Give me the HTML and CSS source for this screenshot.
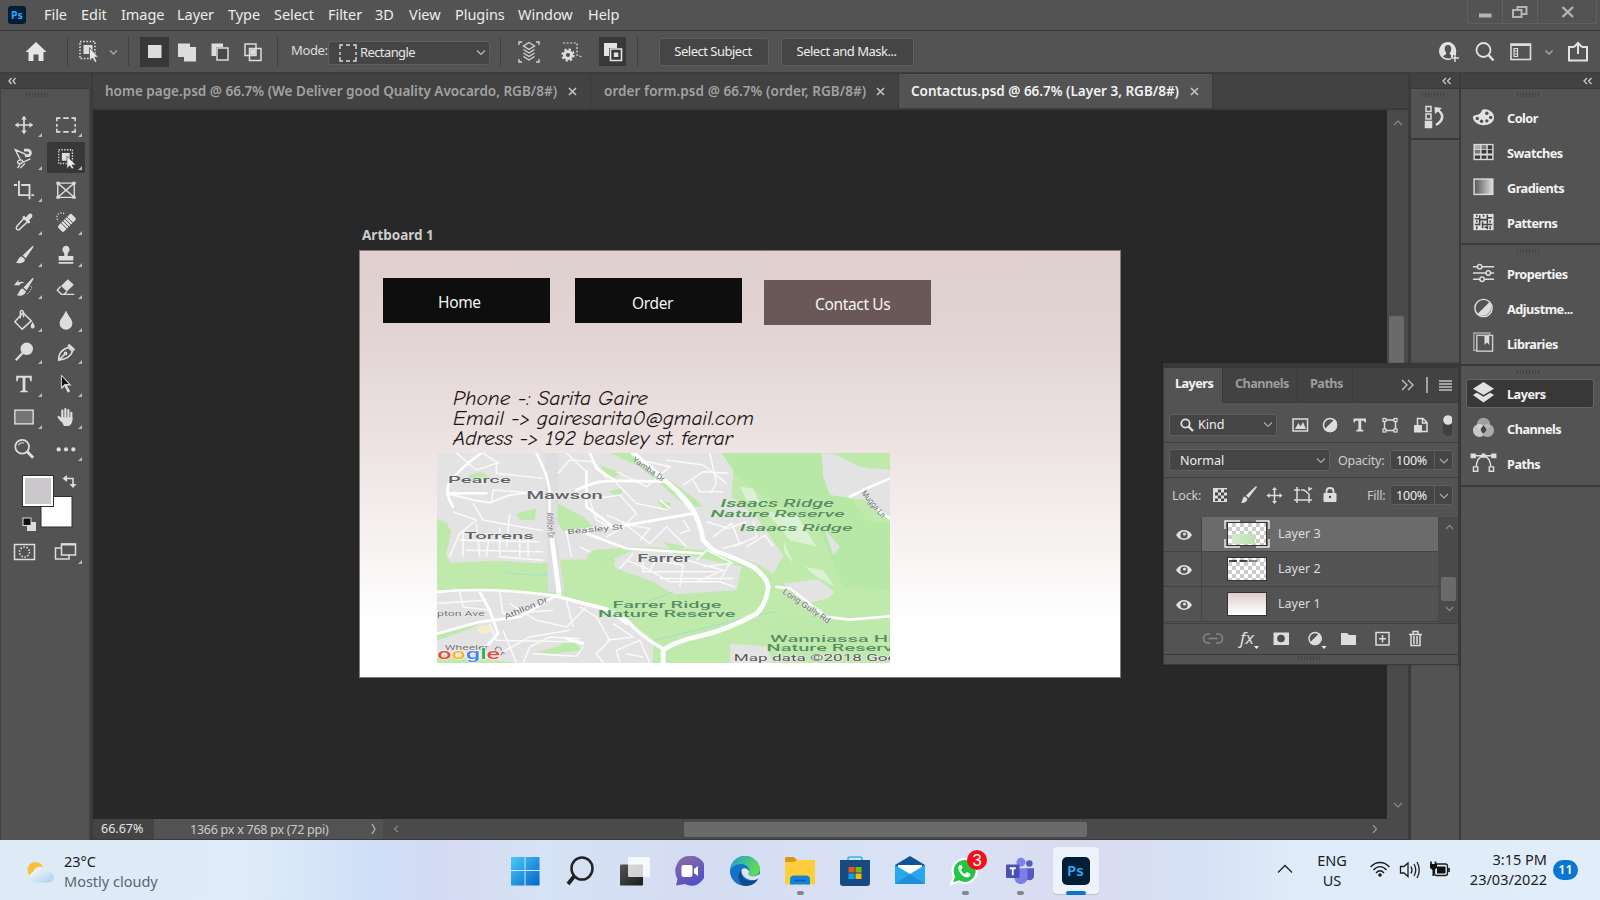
FILE: index.html
```html
<!DOCTYPE html>
<html lang="en">
<head>
<meta charset="utf-8">
<title>Contactus.psd</title>
<link rel="stylesheet" href="styles.css">
</head>
<body>
<header class="menubar">
  <svg class="pslogo" width="18" height="18" viewBox="0 0 18 18"><rect width="18" height="18" rx="3" fill="#001e36"/><text x="3" y="12.8" font-size="10.5" font-weight="700" fill="#31a8ff">Ps</text></svg>
  <nav class="menus"><span>File</span><span>Edit</span><span>Image</span><span>Layer</span><span>Type</span><span>Select</span><span>Filter</span><span>3D</span><span>View</span><span>Plugins</span><span>Window</span><span>Help</span></nav>
  <div class="winctl">
    <div><svg width="34" height="24"><rect x="11" y="13.500" width="12.500" height="4" fill="#b4b4b4"/></svg></div>
    <div><svg width="34" height="24" fill="none" stroke="#b4b4b4" stroke-width="2"><rect x="10" y="10" width="8.500" height="7"/><path d="M14.500 9.500V7H23.500V14H19"/></svg></div>
    <div><svg width="58" height="24" stroke="#b4b4b4" stroke-width="2.400"><path d="M24.500 7L35 17M35 7L24.500 17"/></svg></div>
  </div>
</header>

<section class="options">
  <svg class="home" width="22" height="22" viewBox="0 0 22 22" fill="#e6e6e6"><path d="M11 1L21.500 11H18.500V20H13.500V13.500H8.500V20H3.500V11H.5Z"/></svg>
  <i class="sep s1"></i>
  <svg class="objsel" width="40" height="24" viewBox="0 0 40 24"><rect x="1" y="1.500" width="15" height="17" fill="none" stroke="#ddd" stroke-width="1.600" stroke-dasharray="1.600 1.600"/><rect x="4.500" y="5" width="9" height="9" fill="#ddd"/><path d="M10.500 7.500V21L13.500 18L16 22.500L18 21.500L15.800 17.200H19.500Z" fill="#e6e6e6" stroke="#535353" stroke-width=".8"/><path d="M31 10.500L34.500 14L38 10.500" fill="none" stroke="#aaa" stroke-width="1.300"/></svg>
  <i class="sep s2"></i>
  <div class="modebtns">
    <span class="on"><svg width="20" height="20"><rect x="3" y="3" width="13.500" height="13" fill="#ddd"/></svg></span>
    <span><svg width="20" height="20" fill="#ddd"><path d="M1 1.500H13V5H19V19.500H7V15H1Z"/></svg></span>
    <span><svg width="20" height="20"><path d="M1.500 1.500H13V5H6V14H1.500Z" fill="#ddd"/><rect x="7" y="6" width="11" height="12" fill="#494949" stroke="#ddd" stroke-width="1.500"/></svg></span>
    <span><svg width="20" height="20" fill="none" stroke="#ddd" stroke-width="1.500"><rect x="2" y="2" width="11" height="11.500"/><rect x="6.500" y="6.500" width="11.500" height="12"/><path d="M8 8H12V12H8Z" fill="#ddd"/></svg></span>
  </div>
  <i class="sep s3"></i>
  <label class="modelabel">Mode:</label>
  <div class="modesel"><svg width="20" height="18" viewBox="0 0 20 18" fill="none" stroke="#ddd" stroke-width="1.400"><path d="M5 1H2V5M2 8V11M2 13V17H5M8 17H12M15 17H18V13M18 11V8M18 5V1H15M12 1H8"/></svg><span>Rectangle</span><svg class="chev" width="10" height="7" fill="none" stroke="#bbb" stroke-width="1.200"><path d="M1 1.500L5 5.500L9 1.500"/></svg></div>
  <i class="sep s4"></i>
  <svg class="layersmp" width="22" height="22" viewBox="0 0 22 22" fill="none" stroke="#d4d4d4" stroke-width="1.400"><path d="M1 4V1H4M18 1H21V4M21 18V21H18M4 21H1V18M11 1.500L16.500 5L11 8.500L5.500 5ZM5.500 8.500L11 12L16.500 8.500M5.500 12L11 15.500L16.500 12M5.500 15.500L11 19L16.500 15.500"/></svg>
  <svg class="gearsel" width="24" height="22" viewBox="0 0 24 22" fill="none" stroke="#ddd"><path d="M3 2H17V14L22 16" stroke-dasharray="2 1.600" stroke-width="1.200"/><circle cx="8" cy="14" r="3.600" stroke-width="3"/><circle cx="8" cy="14" r="5.600" stroke-width="2.200" stroke-dasharray="2.200 2.200"/></svg>
  <span class="subtract"><svg width="20" height="20"><path d="M1 1H14V6H6V14H1Z" fill="#e2e2e2"/><path d="M7.500 7H18.500V18.500H7.500Z" fill="#383838" stroke="#e2e2e2" stroke-width="1.600"/><rect x="10.800" y="10.500" width="4.500" height="4.500" fill="#e2e2e2"/></svg></span>
  <i class="sep s5"></i>
  <button class="btn b1">Select Subject</button>
  <button class="btn b2">Select and Mask...</button>
  <div class="optright">
    <svg width="23" height="22" viewBox="0 0 23 22"><path d="M10 1A9 9 0 1 0 13 18.500V16H15V14H18V12A9 9 0 0 0 10 1Z" fill="#e2e2e2"/><path d="M10 4C7.500 4 6.500 6 6.700 8C6.900 10 8 11.500 8.300 12C8.300 14 6 14 5 15.500A8 8 0 0 0 13 17V14C12 13.500 11.700 13 11.700 12C13 10.500 13.300 9 13.300 8C13.300 5.500 12.200 4 10 4Z" fill="#535353"/><path d="M17 13V21M13 17H21" stroke="#e2e2e2" stroke-width="1.400"/></svg>
    <svg width="20" height="22" viewBox="0 0 20 22" fill="none" stroke="#e2e2e2"><circle cx="8.500" cy="9" r="7" stroke-width="1.800"/><path d="M13.500 14L18.500 19.500" stroke-width="2.600"/></svg>
    <svg width="22" height="22" viewBox="0 0 22 22" fill="none" stroke="#ddd"><rect x="1" y="3" width="19.500" height="15.500" stroke-width="1.600"/><path d="M1 4H20" stroke-width="2"/><path d="M4 7.500H7.500V15.500H4ZM4 10H7.500M4 13H7.500" stroke-width="1.200"/></svg>
    <svg width="10" height="22" viewBox="0 0 10 22" fill="none" stroke="#aaa" stroke-width="1.300"><path d="M1.500 9.500L5 13L8.500 9.500"/></svg>
    <svg width="22" height="22" viewBox="0 0 22 22" fill="none" stroke="#e2e2e2" stroke-width="2"><path d="M7 6H2V19.500H20V6H15M11 13V2M7 6L11 2L15 6"/></svg>
  </div>
</section>

<main class="work">
  <aside class="tools">
    <div class="strip"><svg width="8" height="8"><path d="M3.500 1L1 4L3.500 7M7.500 1L5 4L7.500 7" fill="none" stroke="#ccc" stroke-width="1.300"/></svg></div>
    <div class="grip"></div>
    <div class="toolgrid">
      <span class="t"><svg viewBox="0 0 24 24"><path d="M12 3V21M3 12H21" stroke="#ddd" stroke-width="1.800"/><path d="M12 2L15 6H9ZM12 22L15 18H9ZM2 12L6 9V15ZM22 12L18 9V15Z" fill="#ddd"/></svg></span>
      <span class="t"><svg viewBox="0 0 24 24" fill="none" stroke="#ddd" stroke-width="1.700"><path d="M2 8V4.500H6M9 4.500H15M18 4.500H22V8M22 11V14M22 16V19.500H18M15 19.500H9M6 19.500H2V16M2 14V11"/></svg></span>
      <span class="t"><svg viewBox="0 0 24 24" fill="none" stroke="#ddd" stroke-width="1.500"><path d="M14 8L2.500 3L8 14M8 14C4 15 4 19 8 18C12 17 11 14 8 14M10 17L19 13M8 18L5 23M13 18L8 23"/><path d="M12 3.500H16A3 3 0 0 1 16 9.500H13" stroke-width="3"/></svg></span>
      <span class="t on"><svg viewBox="0 0 24 24"><rect x="4" y="3" width="15" height="15" fill="none" stroke="#ddd" stroke-width="1.500" stroke-dasharray="1.500 1.500"/><rect x="7.500" y="6.500" width="8.500" height="8.500" fill="#ddd"/><path d="M13 10V23.500L16 20.500L18.500 24L20.500 23L18.500 19.500H23Z" fill="#eee" stroke="#383838" stroke-width=".7"/></svg></span>
      <span class="t"><svg viewBox="0 0 24 24" fill="none" stroke="#ddd" stroke-width="2"><path d="M6.500 2V17.500H18M1 6.500H4.500M9 6.500H18V22M20 17.500H23"/></svg></span>
      <span class="t nt"><svg viewBox="0 0 24 24" fill="none" stroke="#ddd" stroke-width="1.500"><path d="M3 4.500H21V20H3ZM3 4.500L21 20M21 4.500L3 20"/><path d="M1.500 4.500H5M19 4.500H22.500M1.500 20H5M19 20H22.500" stroke-width="3"/></svg></span>
      <span class="t"><svg viewBox="0 0 24 24"><path d="M12 8L4 17C2.500 19 5 21.500 7 20L15.500 12" fill="none" stroke="#ddd" stroke-width="1.600"/><path d="M10 7L12 5L14 7L17 3.500C19.500 1.500 22.500 4.500 20.500 7L17.500 10L19 12L17 14Z" fill="#ddd"/></svg></span>
      <span class="t"><svg viewBox="0 0 24 24"><path d="M10 3A5 5 0 1 0 4 11" fill="none" stroke="#ddd" stroke-width="1.200" stroke-dasharray="1.500 1.500"/><g transform="rotate(-45 13 13)"><rect x="2.500" y="8.500" width="21" height="9" rx="2" fill="#ddd"/><path d="M8.500 8V18M11.500 8V18M14.500 8V18M17.500 8V18" stroke="#535353"/></g></svg></span>
      <span class="t"><svg viewBox="0 0 24 24" fill="#ddd"><path d="M21.500 2L22.500 3L14 15.500L10.500 12.500ZM9.500 13.500L13 16.500C13 20 8 22 3 20.500C6 18.500 5.500 14 9.500 13.500Z"/></svg></span>
      <span class="t"><svg viewBox="0 0 24 24" fill="#ddd"><path d="M12 2A4 4 0 0 0 9 8.500C10 10 10.500 11 10 13H4V18H20V13H14C13.500 11 14 10 15 8.500A4 4 0 0 0 12 2ZM4 19.500H20V21.500H4Z"/></svg></span>
      <span class="t"><svg viewBox="0 0 24 24" fill="#ddd"><path d="M21.500 2L22.500 3L15 15.500L11.500 12.500ZM10.500 13.500L14 16.500C14 20 9 22.500 4 21C7 19 6.500 14 10.500 13.500Z"/><path d="M1 10L6 4V7C10 5 12 7 12.500 8C10 7 8 7.500 7 10Z"/><path d="M20 11V14L17.500 18L14 21" fill="none" stroke="#ddd" stroke-dasharray="1.500 1.500"/></svg></span>
      <span class="t"><svg viewBox="0 0 24 24"><path d="M14 3.500L20.500 9.500L13 17L6.500 11Z" fill="#ddd"/><path d="M6 11.500L2.500 15.500L7 20H21M7 20H10L13 17" fill="none" stroke="#ddd" stroke-width="1.500"/></svg></span>
      <span class="t"><svg viewBox="0 0 24 24"><path d="M11 4L20 13L10 22L2 14ZM8 10V4C8 1 11 1 11.500 4V9" fill="none" stroke="#ddd" stroke-width="1.600"/><path d="M21.500 14C23 17 24 18.500 23.500 20A2.200 2.200 0 0 1 19.500 20C19 18.500 20 16.500 21.500 14Z" fill="#ddd"/></svg></span>
      <span class="t"><svg viewBox="0 0 24 24" fill="#ddd"><path d="M12 1.500C14 7 19 11 19 15.500A7 7 0 0 1 5 15.500C5 11 10 7 12 1.500Z"/></svg></span>
      <span class="t"><svg viewBox="0 0 24 24"><circle cx="15" cy="8.500" r="6.800" fill="#ddd"/><path d="M10.500 13L3 21" stroke="#ddd" stroke-width="2.400"/></svg></span>
      <span class="t"><svg viewBox="0 0 24 24" fill="none" stroke="#ddd" stroke-width="1.700"><path d="M4 21C4 14 6 10 14.500 7L19 11.500C17 18 11 20 4 21ZM4 21L11 14"/><circle cx="11.500" cy="13.500" r="1.200"/><path d="M14.500 4L21 10" stroke-width="3"/></svg></span>
      <span class="t"><svg viewBox="0 0 24 24" fill="#ddd"><path d="M3.500 3H20.500V9H19L18 5.200H13.500V19L16 19.500V21H8V19.500L10.500 19V5.200H6L5 9H3.500Z"/></svg></span>
      <span class="t"><svg viewBox="0 0 24 24"><path d="M7 2V18L10.500 14.500L14 21.500L16.500 20L13 13.500H18Z" fill="#ddd"/><path d="M7 2.500V16L10.500 12.500H16Z" fill="#111" stroke="#ddd" stroke-width="1"/></svg></span>
      <span class="t"><svg viewBox="0 0 24 24"><rect x="2" y="4.500" width="20" height="15" fill="#757575" stroke="#ddd" stroke-width="1.500"/></svg></span>
      <span class="t"><svg viewBox="0 0 24 24" fill="none" stroke="#ddd" stroke-width="2.400" stroke-linecap="round"><path d="M8 13V5M11.300 12V3.500M14.600 12V4.500M17.800 13V7.500M4 12L7 16"/><path d="M7 13.500H18C18 17 16.500 20.500 14.500 20.500H10.500Z" fill="#ddd"/></svg></span>
      <span class="t nt"><svg viewBox="0 0 24 24" fill="none" stroke="#ddd"><circle cx="10" cy="9.500" r="7.500" stroke-width="1.900"/><path d="M15.500 15L22 21.500" stroke-width="3.200"/><path d="M6 8A4.500 4.500 0 0 1 12 5.500" stroke-width="1.200"/></svg></span>
      <span class="t"><svg viewBox="0 0 24 24" fill="#ddd"><circle cx="4" cy="12.500" r="2.300"/><circle cx="12" cy="12.500" r="2.300"/><circle cx="20" cy="12.500" r="2.300"/></svg></span>
    </div>
    <svg class="swatches" width="88" height="98" viewBox="0 470 88 98" fill="none"><rect x="41" y="497.500" width="31" height="30.500" fill="#fff" stroke="#2e2e2e"/><rect x="22.500" y="476.500" width="31" height="31" fill="#fff" stroke="#2e2e2e"/><rect x="25" y="479" width="26" height="26" fill="#cbc8cb"/><path d="M65 479.500H73V487" stroke="#ddd" stroke-width="1.600"/><path d="M62.500 479.500L67 476V483ZM73 489L69.500 485H76.500Z" fill="#ddd"/><rect x="27" y="523" width="9" height="9" fill="#ddd"/><rect x="23" y="519" width="8" height="7.500" fill="#111" stroke="#ddd"/><rect x="14.500" y="545.500" width="20" height="15" stroke="#ddd" stroke-width="1.500"/><circle cx="24.500" cy="553" r="5" stroke="#ddd" stroke-width="1.500" stroke-dasharray="1.600 1.500"/><path d="M61 549H55.500V560H69V556" stroke="#ddd" stroke-width="1.500"/><rect x="61.500" y="545" width="14" height="11" stroke="#ddd" stroke-width="1.500"/><path d="M61 545.500H76" stroke="#ddd" stroke-width="2"/><path d="M82 561V565H78Z" fill="#bbb"/></svg>
  </aside>

  <section class="doc">
    <div class="tabs">
      <div class="tab t1"><b>home page.psd @ 66.7% (We Deliver good Quality Avocardo, RGB/8#)</b><svg width="9" height="9"><path d="M1 1L8 8M8 1L1 8" stroke="#c4c4c4" stroke-width="1.600"/></svg></div>
      <div class="tab t2"><b>order form.psd @ 66.7% (order, RGB/8#)</b><svg width="9" height="9"><path d="M1 1L8 8M8 1L1 8" stroke="#c4c4c4" stroke-width="1.600"/></svg></div>
      <div class="tab t3"><b>Contactus.psd @ 66.7% (Layer 3, RGB/8#)</b><svg width="9" height="9"><path d="M1 1L8 8M8 1L1 8" stroke="#c4c4c4" stroke-width="1.600"/></svg></div>
    </div>
    <div class="view">
      <div class="canvas">
        <div class="ablabel">Artboard 1</div>
        <div class="artboard">
          <div class="navb n1">Home</div><div class="navb n2">Order</div><div class="navb n3">Contact Us</div>
          <svg class="hand" width="320" height="70" viewBox="450 385 320 70"><text x="453" y="404.500" textLength="195" lengthAdjust="spacingAndGlyphs">Phone -: Sarita Gaire</text><text x="453" y="425" textLength="301" lengthAdjust="spacingAndGlyphs">Email -&gt; gairesarita0@gmail.com</text><text x="453" y="445" textLength="280" lengthAdjust="spacingAndGlyphs">Adress -&gt; 192 beasley st. ferrar</text></svg>
          <svg class="map" width="453" height="210" viewBox="52 39 1358 629" preserveAspectRatio="none">
            <rect x="52" y="39" width="1358" height="629" fill="#bfeaac"/>
            <path d="M905 39H1205L1215 110L1290 170L1340 240L1410 250V450L1270 440L1190 250L1000 150L930 90Z" fill="#b8e8a5"/>
            <g fill="#e4e3e4">
              <path d="M52 39H905L940 90L935 170L1010 230L1090 345L1060 400L1010 370L870 330L650 320L520 330L500 358L430 358L360 370L240 362L90 368L75 330L85 250L52 235Z"/>
              <path d="M575 360L650 325L800 345L965 380L950 450L760 462L700 425L590 385Z"/>
              <path d="M52 455L200 450L400 465L520 500L620 545L700 600V668H300L52 640Z"/>
              <path d="M1205 39L1240 42L1320 80L1410 90V235L1340 180L1230 165L1210 110Z"/>
              <path d="M1090 430L1195 417L1243 455L1225 475L1170 487ZM930 610L1040 618L1060 668H930ZM1215 270L1260 320L1240 345ZM520 668L500 610L570 545L690 620L700 668Z"/>
              <path d="M960 140L1000 145L1025 200L980 180ZM1040 215L1130 225L1190 320L1110 300ZM1090 300L1120 370L1095 340ZM1155 380L1210 390L1245 440L1190 410Z" fill="#dbf1d3"/>
            </g>
            <g fill="#bde9aa">
              <path d="M375 39H408L415 190L490 230L520 260L430 275L380 180ZM52 240L95 270L80 340L52 365ZM290 220L350 205L345 240L300 240ZM150 105L185 95L215 115L140 125ZM540 75L605 100L570 120ZM565 155L610 143L600 170ZM570 39H640L830 180L850 200L800 200L660 80ZM710 180L755 190L740 215ZM500 345L540 325L590 365L560 380ZM730 305L800 320L760 335ZM350 635L410 620L450 595L490 630L400 640Z"/>
              <path d="M1245 42H1320L1405 60L1350 85ZM52 575L200 540L140 570L52 600ZM1000 540L1290 520L1410 560V590L1050 600Z"/>
            </g>
            <path d="M700 600Q850 565 950 540T1075 515M250 395Q350 410 410 400M640 500L760 455" stroke="#b0dfc0" stroke-width="4" fill="none"/>
            <path d="M375 39L415 40L412 300L435 455H385Z" fill="#dedddf"/>
            <g fill="none" stroke="#fafafa" stroke-width="4.500">
              <path d="M110 39L170 90L230 70L230 100L370 115M190 39L240 72M160 190L190 240L370 272M215 190L220 150L370 160M100 215L170 240L120 280L90 350M130 270V350M170 250L180 350M210 280L200 350M240 262V350L370 360M120 300L360 305M140 330L370 335M270 220L260 320M300 290V350M325 290V350"/>
              <path d="M415 100L450 60L520 65L560 115M440 39L500 95M500 150L530 240L570 260M530 175L600 165L650 220L620 250L560 225M590 130L650 190L745 210M660 60L750 80L680 140L590 95M740 60L850 75L920 130M790 135L850 95L925 100M820 120L840 155H910M770 160L810 210M720 180L750 205M870 39L890 130L870 160"/>
              <path d="M560 290L620 255L690 310L740 260L800 320M600 250L690 265L660 300M790 240L810 270L780 280M860 245L925 265L980 245M880 290L935 250L960 310L910 325M980 320L1035 285L1060 320M1000 245L1010 290L940 320M440 275L455 350M480 320L510 335M830 360L860 330L940 370"/>
              <path d="M620 360L680 385L750 425H900L945 440M690 390L710 360L790 375L780 440M640 340L600 385M800 360L910 390L830 425M850 380L930 370L900 420M670 365V395L890 395M720 415H940"/>
              <path d="M120 455L130 500L210 510M240 455L250 520L400 510M52 490L200 480M270 490L350 540M210 550L230 600L490 605M250 570L290 668M240 640L330 590L450 570M310 668L330 620L390 590L480 595M480 500L530 530L570 600L530 640L550 668M580 550L640 590L560 600M600 668L590 630L660 600L690 668M620 640L670 650M440 480L460 560M350 540L440 560L500 500M340 640L470 648L490 620"/>
              <path d="M80 160L160 180L210 188L270 165L350 155" stroke-width="6"/>
            </g>
            <g fill="none" stroke="#fff" stroke-linecap="round">
              <path d="M185 39Q120 85 88 130Q75 160 100 200M350 39L378 100L390 150L388 280M88 160H200M470 150Q520 125 560 123T740 125M510 39L530 85L590 125M500 95L500 200L580 260M440 275L620 255L820 220M500 280L620 325L850 340M52 455Q200 440 400 465L560 505L620 550M52 580L180 545L300 530L410 465M180 455L210 510L235 580L200 620M490 610L440 595M1290 170L1340 145L1410 115M1345 170L1380 215L1410 235M1070 440L1110 445L1220 530L1290 538L1410 528" stroke-width="8"/>
              <path d="M395 285L418 460" stroke-width="14"/>
              <path d="M640 39L740 125Q800 175 820 210T850 300L880 330Q960 360 1000 380Q1040 410 1045 440Q1040 490 1010 520Q930 565 850 585Q760 605 730 630V668" stroke-width="14"/>
              <path d="M410 468L560 508Q620 530 640 560Q690 605 730 625" stroke-width="10"/>
            </g>
            <ellipse cx="195" cy="568" rx="22" ry="12" fill="#f6edcc"/>
            <g class="maptext" stroke="#f0f0f0" stroke-width="3" paint-order="stroke" fill="#606468">
              <g font-weight="500"><text x="85" y="130" font-size="29" textLength="188" lengthAdjust="spacingAndGlyphs">Pearce</text>
              <text x="320" y="176" font-size="30" textLength="229" lengthAdjust="spacingAndGlyphs">Mawson</text>
              <text x="134" y="297" font-size="29" textLength="208" lengthAdjust="spacingAndGlyphs">Torrens</text>
              <text x="652" y="366" font-size="30" textLength="160" lengthAdjust="spacingAndGlyphs">Farrer</text></g>
              <g stroke-width="2" fill="#707478">
              <text transform="translate(443 282) rotate(-5)" font-size="22" textLength="168" lengthAdjust="spacingAndGlyphs">Beasley St</text>
              <text transform="translate(381 218) rotate(87)" font-size="28" textLength="76" lengthAdjust="spacingAndGlyphs">Athllon Dr</text>
              <text transform="translate(636 62) rotate(35)" font-size="24" textLength="112" lengthAdjust="spacingAndGlyphs">Yamba Dr</text>
              <text transform="translate(258 538) rotate(-23)" font-size="24" textLength="138" lengthAdjust="spacingAndGlyphs">Athllon Dr</text>
              <text x="52" y="526" font-size="23" textLength="143" lengthAdjust="spacingAndGlyphs">pton Ave</text>
              <text transform="translate(1086 458) rotate(34)" font-size="25" textLength="166" lengthAdjust="spacingAndGlyphs">Long Gully Rd</text>
              <text transform="translate(1323 160) rotate(50)" font-size="26" textLength="98" lengthAdjust="spacingAndGlyphs">Mugga Ln</text>
              <text x="75" y="630" font-size="22" textLength="132" lengthAdjust="spacingAndGlyphs">Wheeler</text>
              <text transform="translate(220 628) rotate(38)" font-size="26" textLength="36" lengthAdjust="spacingAndGlyphs">Cr</text>
              </g>
              <g fill="#55905f" stroke="#c9edbd" stroke-width="2" font-weight="500">
              <g font-style="italic"><text x="902" y="202" font-size="30" textLength="340" lengthAdjust="spacingAndGlyphs">Isaacs Ridge</text>
              <text x="872" y="230" font-size="29" textLength="402" lengthAdjust="spacingAndGlyphs">Nature Reserve</text>
              <text x="960" y="273" font-size="29" textLength="338" lengthAdjust="spacingAndGlyphs">Isaacs Ridge</text></g>
              <text x="578" y="503" font-size="29" textLength="327" lengthAdjust="spacingAndGlyphs">Farrer Ridge</text>
              <text x="535" y="531" font-size="29" textLength="412" lengthAdjust="spacingAndGlyphs">Nature Reserve</text>
              <text x="1050" y="605" font-size="29" textLength="370" lengthAdjust="spacingAndGlyphs">Wanniassa Hi</text>
              <text x="1040" y="633" font-size="29" textLength="380" lengthAdjust="spacingAndGlyphs">Nature Reserv</text></g>
              <text x="942" y="661" font-size="28" fill="#555" textLength="490" lengthAdjust="spacingAndGlyphs">Map data ©2018 Goo</text>
              <text x="53" y="655" font-size="42" font-weight="500" stroke="#fff" textLength="188" lengthAdjust="spacingAndGlyphs"><tspan fill="#e8493c">o</tspan><tspan fill="#f5b91d">o</tspan><tspan fill="#4285f4">g</tspan><tspan fill="#34a853">l</tspan><tspan fill="#e8493c">e</tspan></text>
            </g>
          </svg>
        </div>
      </div>
      <div class="vscroll"><svg width="20" height="710" fill="none" stroke="#888" stroke-width="1.200"><path d="M7 15L11 11L15 15M7 693L11 697L15 693"/></svg><i></i></div>
    </div>
    <div class="status"><span class="pct">66.67%</span><span class="dims"><em>1366 px x 768 px (72 ppi)</em><svg width="6" height="12"><path d="M1 1L4 6L1 11" fill="none" stroke="#bbb" stroke-width="1.200"/></svg></span><span class="hscroll"><svg width="6" height="8"><path d="M5 1L1.500 4L5 7" fill="none" stroke="#888" stroke-width="1.200"/></svg><i></i><svg width="6" height="8"><path d="M1 0L4.500 4L1 8" fill="none" stroke="#999" stroke-width="1.200"/></svg></span></div>
  </section>

  <aside class="dock1">
    <div class="strip"><svg width="10" height="8"><path d="M4 1L1 4L4 7M8.500 1L5.500 4L8.500 7" fill="none" stroke="#ccc" stroke-width="1.300"/></svg></div>
    <div class="grip"></div>
    <div class="hist"><svg width="20" height="24" viewBox="0 0 20 24" fill="none" stroke="#ddd" stroke-width="1.500"><rect x="2" y="1.500" width="5" height="5"/><rect x="2" y="9" width="5" height="5"/><rect x="1.500" y="16.500" width="6" height="6" fill="#ddd"/><path d="M13.500 5C20 9 20 15 12 20" stroke-width="2.600"/><path d="M11 9L10.500 2L18 3Z" fill="#ddd" stroke="none"/></svg></div>
    <div class="rest"></div>
  </aside>

  <aside class="dock2">
    <div class="strip"><svg width="10" height="8"><path d="M4 1L1 4L4 7M8.500 1L5.500 4L8.500 7" fill="none" stroke="#ccc" stroke-width="1.300"/></svg></div>
    <div class="group g1"><div class="grip"></div>
      <div class="item"><svg viewBox="0 0 24 24"><path d="M1 12C1 9 5 10 8 8C11 6 9 4 13 3.500C18 3 23 7 23 12C23 17 18 20 12 20C6 20 1 16 1 12Z" fill="#e2e2e2"/><g fill="#535353"><circle cx="5.500" cy="13" r="1.800"/><circle cx="10" cy="16" r="1.800"/><circle cx="15.500" cy="15.500" r="1.800"/><circle cx="19.500" cy="12" r="1.800"/><circle cx="15.500" cy="7.500" r="1.800"/></g></svg>Color</div>
      <div class="item"><svg viewBox="0 0 24 24"><rect x="1.500" y="3" width="21" height="17" fill="#d8d8d8"/><g fill="#383838"><path d="M3 9.500H8.500V13H3ZM10 4.500H15V8.500H10Z" fill="#777"/><path d="M3 4.500H8.500V8.500H3Z" fill="#aaa"/><path d="M16.500 4.500H21V8.500H16.500ZM10 9.500H15V13H10ZM16.500 9.500H21V13H16.500ZM3 15H8.500V18.500H3ZM10 15H15V18.500H10ZM16.500 15H21V18.500H16.500Z"/></g></svg>Swatches</div>
      <div class="item"><svg viewBox="0 0 24 24"><defs><linearGradient id="gg"><stop stop-color="#555"/><stop offset="1" stop-color="#ddd"/></linearGradient></defs><rect x="2.200" y="3.200" width="19.500" height="16" fill="url(#gg)" stroke="#ddd" stroke-width="1.500"/></svg>Gradients</div>
      <div class="item"><svg viewBox="0 0 24 24"><rect x="1.500" y="3" width="21" height="17" fill="#e2e2e2"/><path d="M3 8H8M8 4.500V15M3 14H8M5 16V19M5 4V6M8 9H16M16 4V13M16 7H21M12 4V6M11 11V18M11 14H21M19 10V12M16 15V19M19 16V19M13 17H16M5 10V12" fill="none" stroke="#444" stroke-width="1.600"/></svg>Patterns</div>
    </div>
    <div class="group g2"><div class="grip"></div>
      <div class="item"><svg viewBox="0 0 24 24" fill="#535353" stroke="#ddd" stroke-width="1.500"><path d="M1 5H23M1 11.500H23M1 18H23"/><circle cx="8" cy="5" r="2.300"/><circle cx="17" cy="11.500" r="2.300"/><circle cx="10.500" cy="18" r="2.300"/></svg>Properties</div>
      <div class="item"><svg viewBox="0 0 24 24"><circle cx="12" cy="11.500" r="9" fill="none" stroke="#ddd" stroke-width="1.500"/><path d="M18.300 5.200A9 9 0 0 1 5.700 17.800Z" fill="#ddd"/></svg>Adjustme...</div>
      <div class="item"><svg viewBox="0 0 24 24" fill="none" stroke="#aaa" stroke-width="1.500"><path d="M5 19H2V1H18.500V3.500"/><rect x="5" y="3.500" width="16.500" height="16.500" stroke="#ccc"/><path d="M13 4V13.500L15.500 11L18 13.500V4Z" fill="#ddd" stroke="none"/></svg>Libraries</div>
    </div>
    <div class="group g3"><div class="grip"></div>
      <div class="item sel"><svg viewBox="0 0 24 24" fill="#e2e2e2"><path d="M12 0L23 7L12 13.500L1 7ZM1 13.500L5 11.300L12 15.500L19 11.300L23 13.500L12 21.500Z"/></svg>Layers</div>
      <div class="item"><svg viewBox="0 0 24 24"><circle cx="12" cy="7.500" r="6.800" fill="#a0a0a0"/><circle cx="7.800" cy="14" r="6.800" fill="#ddd" fill-opacity=".85"/><circle cx="16.200" cy="14" r="6.800" fill="#bbb" fill-opacity=".85"/><path d="M12 8.500L15 12.500C15 14.500 13 16.500 12 17.500C11 16.500 9 14.500 9 12.500Z" fill="#444"/></svg>Channels</div>
      <div class="item"><svg viewBox="0 0 24 24" fill="none" stroke="#ddd" stroke-width="1.500"><path d="M0 4H24M4 16.500C5 8.500 8 4.500 12 4.500S19 8.500 20 16.500"/><path d="M-1.500 1.500H4V6.500H-1.500ZM10 1.500H14V6H10ZM20 1.500H25.500V6.500H20Z" fill="#ddd" stroke="none"/><path d="M1.500 15.500H6V20H1.500ZM18 15.500H22.500V20H18Z" fill="#535353"/></svg>Paths</div>
    </div>
    <div class="rest"></div>
  </aside>

  <section class="layers">
    <div class="ltabs"><b class="on">Layers</b><b>Channels</b><b>Paths</b><svg width="54" height="34" viewBox="0 0 54 34" fill="none" stroke="#c4c4c4"><path d="M1 12L6 17L1 22M7 12L12 17L7 22" stroke-width="1.300"/><path d="M26 9V25" stroke-width="1.500"/><path d="M38 13H51M38 16H51M38 19H51M38 22H51" stroke-width="1.700"/></svg></div>
    <div class="frow r1">
      <div class="box kind"><svg width="14" height="14" fill="none" stroke="#e2e2e2"><circle cx="5.500" cy="5.500" r="4.200" stroke-width="1.800"/><path d="M8.500 8.500L13 13" stroke-width="2.400"/></svg><span>Kind</span><svg class="chev" width="10" height="7" fill="none" stroke="#aaa" stroke-width="1.200"><path d="M1 1.500L5 5.500L9 1.500"/></svg></div>
      <svg class="filters" width="162" height="26" viewBox="1290 412 162 26" fill="none" stroke="#ddd" stroke-width="1.500"><rect x="1293" y="419" width="14.500" height="12"/><path d="M1295 429L1298.500 423L1300.500 426.500L1303 422L1306 429Z" fill="#ddd" stroke="none"/><circle cx="1330" cy="425" r="6.500"/><path d="M1334.600 420.400A6.500 6.500 0 0 1 1325.400 429.600Z" fill="#ddd"/><path d="M1353.500 418.500H1366V422.500H1364.800L1364 420.800H1361.200V429.500L1363.300 430V431.500H1356.300V430L1358.400 429.500V420.800H1355.500L1354.700 422.500H1353.500Z" fill="#ddd" stroke="none"/><rect x="1384.500" y="420" width="11" height="10.500"/><g fill="#535353" stroke-width="1.200"><rect x="1383" y="418.500" width="3" height="3"/><rect x="1394" y="418.500" width="3" height="3"/><rect x="1383" y="429" width="3" height="3"/><rect x="1394" y="429" width="3" height="3"/></g><path d="M1417.500 425V418.500H1423L1427 422.500V431.500H1422M1422.500 418.500V423H1427"/><rect x="1414" y="425" width="8" height="7.500" fill="#ddd" stroke="none"/><rect x="1443" y="415" width="10" height="21" rx="5" fill="#404040" stroke="none"/><circle cx="1448" cy="420" r="4.800" fill="#ddd" stroke="none"/></svg>
    </div>
    <div class="frow r2">
      <div class="box normal"><span>Normal</span><svg class="chev" width="10" height="7" fill="none" stroke="#aaa" stroke-width="1.200"><path d="M1 1.500L5 5.500L9 1.500"/></svg></div>
      <label>Opacity:</label><div class="box num"><span>100%</span><svg width="18" height="18"><path d="M.5 0V18" stroke="#5e5e5e"/><path d="M6 8L10 12L14 8" fill="none" stroke="#aaa" stroke-width="1.200"/></svg></div>
    </div>
    <div class="frow r3">
      <label class="lock">Lock:</label>
      <svg class="locks" width="126" height="20" viewBox="1212 485 126 20" fill="none" stroke="#ddd" stroke-width="1.500"><rect x="1213" y="488" width="14" height="14" fill="#ddd" stroke="none"/><path d="M1218 489.500H1221V492.500H1218ZM1224 489.500H1227V492.500H1224ZM1215 492.500H1218V495.500H1215ZM1221 492.500H1224V495.500H1221ZM1218 495.500H1221V498.500H1218ZM1224 495.500H1227V498.500H1224ZM1215 498.500H1218V501H1215ZM1221 498.500H1224V501H1221Z" fill="#444" stroke="none"/><path d="M1256 486L1257 487L1248.500 498L1246 495.500ZM1245 496.500L1247.500 499C1247 502 1244 503.500 1241 503C1243 501 1242 497 1245 496.500Z" fill="#ddd" stroke="none"/><path d="M1274.500 489V502M1268 495.500H1281"/><path d="M1274.500 487L1277 490H1272ZM1274.500 504L1277 501H1272ZM1266.500 495.500L1269.500 493V498ZM1282.500 495.500L1279.500 493V498Z" fill="#ddd" stroke="none"/><path d="M1294 490H1300M1297 487V500H1309V494L1304 490H1301M1294 500H1298M1309 500H1312M1309 487V490L1312 488M1297 500V503M1309 500V503"/><rect x="1323.500" y="493" width="13" height="9" rx="1" fill="#ddd" stroke="none"/><path d="M1326.500 493V491C1326.500 487 1333.500 487 1333.500 491V493" stroke-width="1.800"/><circle cx="1330" cy="497" r="1.200" fill="#444" stroke="none"/></svg>
      <label class="fill">Fill:</label><div class="box num"><span>100%</span><svg width="18" height="18"><path d="M.5 0V18" stroke="#5e5e5e"/><path d="M6 8L10 12L14 8" fill="none" stroke="#aaa" stroke-width="1.200"/></svg></div>
    </div>
    <div class="llist">
      <div class="rows">
        <div class="lrow sel"><span class="eye"><svg width="16" height="12" viewBox="0 0 16 12"><path d="M0 6C4-.7 12-.7 16 6C12 12.500 4 12.500 0 6Z" fill="#e0e0e0"/><circle cx="8" cy="6" r="3.600" fill="#535353"/><circle cx="8.500" cy="5" r="1.600" fill="#ddd"/></svg></span><span class="thumb check"><i class="mini"></i><svg class="corner" width="46" height="28" fill="none" stroke="#eee" stroke-width="1.400"><path d="M1 9V1H16M32 1H45V9M45 19V27H32M16 27H1V19"/></svg></span><span class="nm">Layer 3</span></div>
        <div class="lrow"><span class="eye"><svg width="16" height="12" viewBox="0 0 16 12"><path d="M0 6C4-.7 12-.7 16 6C12 12.500 4 12.500 0 6Z" fill="#e0e0e0"/><circle cx="8" cy="6" r="3.600" fill="#535353"/><circle cx="8.500" cy="5" r="1.600" fill="#ddd"/></svg></span><span class="thumb check"><svg class="bars" width="38" height="20"><path d="M1 3H9M11.500 3H19.500" stroke="#111" stroke-width="1.600"/><path d="M21 3H29" stroke="#655" stroke-width="1.400"/></svg></span><span class="nm">Layer 2</span></div>
        <div class="lrow"><span class="eye"><svg width="16" height="12" viewBox="0 0 16 12"><path d="M0 6C4-.7 12-.7 16 6C12 12.500 4 12.500 0 6Z" fill="#e0e0e0"/><circle cx="8" cy="6" r="3.600" fill="#535353"/><circle cx="8.500" cy="5" r="1.600" fill="#ddd"/></svg></span><span class="thumb pink"></span><span class="nm">Layer 1</span></div>
      </div>
      <div class="lscroll"><svg width="20" height="106" fill="none" stroke="#888" stroke-width="1.300"><path d="M8 12L11.500 8.500L15 12M8 90L11.500 93.500L15 90"/><rect x="3" y="60" width="15" height="24" rx="2" fill="#6a6a6a" stroke="none"/></svg></div>
    </div>
    <div class="lfoot"><svg width="250" height="28" viewBox="1200 623 250 28" fill="none" stroke="#ddd" stroke-width="1.500"><path d="M1210 633H1208A4 4 0 0 0 1208 642H1210M1216 633H1218A4 4 0 0 1 1218 642H1216M1208.500 637.500H1217.500" stroke="#888"/><text x="1240" y="643" font-size="16.500" font-style="italic" stroke="none" fill="#ddd" textLength="14" lengthAdjust="spacingAndGlyphs">fx</text><path d="M1254 645H1259L1256.500 648ZM1321.500 645H1326.500L1324 648Z" fill="#eee" stroke="none"/><path d="M1273.500 631.500H1289V644H1273.500Z" fill="#ddd" stroke="none"/><circle cx="1281" cy="637.500" r="3.800" fill="#4a4a4a" stroke="none"/><circle cx="1315" cy="637.500" r="6"/><path d="M1319.300 633.300A6 6 0 0 1 1310.700 641.700Z" fill="#ddd"/><path d="M1341 632H1347L1349 634H1356V644H1341Z" fill="#ddd" stroke="none"/><rect x="1376" y="631.500" width="13" height="12.500"/><path d="M1382.500 634V641.500M1379 637.800H1386"/><path d="M1409 633.500H1422M1413 633V630.500H1418V633M1411 634V644.500H1420V634M1414 635V643M1417 635V643"/></svg></div>
    <div class="lgrip"><div class="grip"></div></div>
  </section>
</main>

<footer class="taskbar">
  <div class="weather"><svg width="28" height="24" viewBox="0 0 28 24"><defs><linearGradient id="cl" x2="1" y2="1"><stop stop-color="#fff"/><stop offset="1" stop-color="#a9cfee"/></linearGradient></defs><circle cx="8.500" cy="9" r="8" fill="#fbbf3b"/><path d="M7 21.500A5.500 5.500 0 0 1 6 11C8 4.500 17 3.500 19 10.500C24 9.500 27 12.500 27 16S24 21.500 21 21.500Z" fill="url(#cl)"/></svg><div><p>23°C</p><p class="sub">Mostly cloudy</p></div></div>
  <div class="apps">
    <span><svg viewBox="0 0 30 30"><defs><linearGradient id="w" x2="1" y2="1"><stop stop-color="#4cc9fb"/><stop offset="1" stop-color="#0067c8"/></linearGradient></defs><path d="M1 1H14.500V14H1ZM15.500 1H29.500V14H15.500ZM1 15H14.500V29.500H1ZM15.500 15H29.500V29.500H15.500Z" fill="url(#w)"/></svg></span>
    <span><svg viewBox="0 0 30 30" fill="none" stroke="#222"><ellipse cx="17" cy="12.500" rx="10.500" ry="11" stroke-width="2.500"/><path d="M9 20.500L3 28" stroke-width="3.800"/></svg></span>
    <span><svg viewBox="0 0 30 30"><defs><linearGradient id="tv" x2="1" y2="1"><stop stop-color="#555"/><stop offset="1" stop-color="#1c1c1c"/></linearGradient></defs><rect y="8.500" width="23" height="21" rx="1" fill="url(#tv)"/><rect x="8" y="1" width="22" height="20" rx="1" fill="#fff" fill-opacity=".78"/></svg></span>
    <span><svg viewBox="0 0 30 30"><defs><linearGradient id="ch" x2=".5" y2="1"><stop stop-color="#8f6d9e"/><stop offset="1" stop-color="#5550c8"/></linearGradient></defs><path d="M15 0A14 15 0 1 1 11 28L2 29.500L3.500 23A14 15 0 0 1 15 0Z" fill="url(#ch)"/><rect x="7.500" y="9" width="11" height="12" rx="2" fill="#fff"/><path d="M20 13L24 10V20L20 17Z" fill="#fff"/></svg></span>
    <span><svg viewBox="0 0 30 30"><defs><linearGradient id="ed" x2="1" y2=".3"><stop stop-color="#1a9fd9"/><stop offset="1" stop-color="#5edb57"/></linearGradient></defs><circle cx="15" cy="15" r="15" fill="#1173c7"/><path d="M0 14C2 3 9 0 15 0C24 0 30 7 30 13C30 18 26 20 22 20C18 20 18 18 19 16C20 12 16 8 11 8C6 8 2 11 0 14Z" fill="url(#ed)"/><path d="M11 14C10 20 15 25 21 25C25 25 26 24 28 23C25 29 18 31 13 29.500C8 27 7 18 11 14Z" fill="#114a8b"/><path d="M12 13C10 16 14 25 25 24L29 22L31 18L25 20C18 21 18 18 19 16C19 13 14 11 12 13Z" fill="#dce3f5"/></svg></span>
    <span><svg viewBox="0 0 30 30"><path d="M0 2Q0 1 2 1H9L12 4H30V10H0Z" fill="#d89a12"/><path d="M0 6H9L12 4H30V28.500H0Z" fill="#ffcd3c"/><path d="M5 28.500V23Q5 19.500 9 19.500H21Q25 19.500 25 23V28.500Z" fill="#1583d8"/><path d="M9 24.500H21" stroke="#0c5ba5" stroke-width="1.500"/></svg><i class="dot"></i></span>
    <span><svg viewBox="0 0 30 30"><path d="M8 7V2.500Q8 1 10 1H20Q22 1 22 2.500V7" fill="none" stroke="#36b3ea" stroke-width="1.600"/><path d="M0 4H30V27Q30 30 27 30H3Q0 30 0 27Z" fill="#174a80"/><path d="M8.500 11H14.500V16.500H8.500Z" fill="#f25022"/><path d="M15.500 11H21.500V16.500H15.500Z" fill="#7fba00"/><path d="M8.500 17.500H14.500V23H8.500Z" fill="#00a4ef"/><path d="M15.500 17.500H21.500V23H15.500Z" fill="#ffb900"/></svg></span>
    <span><svg viewBox="0 0 30 30"><path d="M0 9L15 0L30 9V14H0Z" fill="#0f5499"/><path d="M3 9H27V18H3Z" fill="#fff"/><path d="M0 9L15 18L30 9V28H0Z" fill="#28a8ea"/><path d="M0 28L15 18L30 28Z" fill="#1d8fdc"/></svg></span>
    <span><svg viewBox="0 0 30 30"><path d="M14 3A12 12 0 1 1 9 25.500L1.500 28L4 20.500A12 12 0 0 1 14 3Z" fill="#25c445" stroke="#fff" stroke-width="2.200"/><path d="M9.500 9C7 12 9 16 12 19S19 22 20.500 19.500L20 17.500L17 16L15 18C13 17 11.500 15.500 11 13.500L12.500 12L11.500 9Z" fill="#fff"/></svg><b class="badge">3</b><i class="dot"></i></span>
    <span><svg viewBox="0 0 30 30"><circle cx="16" cy="5.500" r="4.800" fill="#7f83e8"/><circle cx="25" cy="7" r="3.500" fill="#545ac4"/><path d="M21 12H30V20C30 24 26 26 22 24Z" fill="#545ac4"/><path d="M9 12H23V22C23 27 19 29 16 29S9 27 9 22Z" fill="#7b80e6"/><rect y="8" width="14.500" height="14.500" rx="1" fill="#494fb5"/><path d="M4 12H10.500M7.250 12V19.500" stroke="#fff" stroke-width="2"/></svg><i class="dot"></i></span>
    <span class="active"><svg viewBox="0 0 30 30"><rect x="1" y="1" width="28" height="28" rx="5" fill="#001e36"/><text x="6" y="20" font-size="15" font-weight="600" fill="#31a8ff">Ps</text></svg><i class="dot"></i></span>
  </div>
  <svg class="up" width="16" height="10"><path d="M1 8.500L8 1.500L15 8.500" fill="none" stroke="#222" stroke-width="1.300"/></svg>
  <div class="lang">ENG<br>US</div>
  <svg class="sys" width="84" height="22" viewBox="1368 859 84 22" fill="none" stroke="#1c1c1c" stroke-width="1.300"><path d="M1370.500 867C1376 861 1384 861 1389.500 867M1373.500 870C1377.500 865.500 1382.500 865.500 1386.500 870M1376 873C1378.500 870 1381.500 870 1384 873"/><circle cx="1380" cy="875" r="1.800" fill="#1c1c1c" stroke="none"/><path d="M1400.500 866.500H1404L1408 863V876.500L1404 873H1400.500ZM1411 866.500Q1413 870 1411 873.500M1414 864Q1417.500 870 1414 876M1417 862Q1421.500 870 1417 878"/><rect x="1434.500" y="864" width="13" height="11.500" rx="2"/><rect x="1437" y="866.500" width="8.500" height="7" fill="#111" stroke="none"/><path d="M1449 868V872M1431 861.500V864M1435.500 861.500V864" stroke-width="1.700"/><path d="M1430 864H1437V868L1434 870V876H1432.500V870L1430 868Z" fill="#111" stroke="none"/></svg>
  <div class="clock">3:15 PM<br>23/03/2022</div>
  <b class="count">11</b>
</footer>
</body>
</html>
```
FILE: styles.css
```css
*{box-sizing:border-box}
body{margin:0;width:1600px;height:900px;overflow:hidden;display:flex;flex-direction:column;background:#535353;color:#e4e4e4;font-family:"Noto Sans","Open Sans",sans-serif;font-size:12.5px}
svg{display:block;flex:none}
p{margin:0}
.menubar{height:31px;flex:none;display:flex;border-bottom:1px solid #3b3b3b;padding-left:8px}
.pslogo{margin-top:6px}
.menus{display:grid;grid-template-columns:37px 40px 56px 51px 46px 54px 47px 34px 46px 63px 70px 60px;margin-left:18px;line-height:29px;font-size:14.5px;letter-spacing:-.05px;color:#ececec}
.winctl{display:flex;margin-left:auto;margin-right:3px;height:24px;border:1px solid #606060;border-top:0;border-radius:0 0 3px 3px}
.winctl div+div{border-left:1px solid #606060}
.options{height:42px;flex:none;display:flex;align-items:center;border-bottom:1px solid #3d3d3d;padding-left:25px}
.sep{width:1px;height:29px;background:#3f3f3f}
.s1{margin:0 11px 0 20px}
.objsel{margin-right:9px}
.s2{margin-right:11px}
.modebtns{display:flex;gap:0}
.modebtns span{width:33px;height:30px;display:grid;place-items:center}
.modebtns .on{width:29px;background:#383838;margin-right:1px}
.s3{margin:0 13px 0 8px}
.modelabel{width:37px;font-size:13px;letter-spacing:-.35px;color:#ddd;padding-bottom:4px}
.modesel{width:162px;height:24px;display:flex;align-items:center;background:#454545;border:1px solid #5e5e5e;border-radius:3px;padding:0 3px 0 9px;margin-top:2px;letter-spacing:-.6px;font-size:13px}
.modesel span{margin:-2px 0 0 2px}
.chev{margin-left:auto}
.s4{margin:0 17px 0 10px}
.gearsel{margin:0 15px 0 20px}
.subtract{width:27px;height:29px;background:#383838;display:grid;place-items:center}
.s5{margin:0 21px 0 11px}
.btn{height:28px;background:#454545;border:1px solid #5f5f5f;border-radius:3px;color:#eee;font:13px "Noto Sans",sans-serif;letter-spacing:-.5px;padding:0 2px 2px 0;margin:0}
.b1{width:110px;margin-right:12px}
.b2{width:133px}
.optright{margin-left:auto;margin-right:11px;display:flex}
.optright svg:nth-child(2){margin-left:14px}
.optright svg:nth-child(3){margin-left:15px}
.optright svg:nth-child(4){margin-left:12px}
.optright svg:nth-child(5){margin-left:13px}
.work{position:relative;height:767px;flex:none;display:flex;background:#3b3b3b}
.strip{height:16px;background:#424242;display:flex;align-items:center;flex:none}
.grip{width:24px;height:4px;background:repeating-linear-gradient(90deg,#434343 0 1px,transparent 1px 3px)}
.tools{width:91px;background:#535353;border-left:1px solid #414141;border-right:2px solid #424242}
.tools .strip{padding-left:7px;border-bottom:1px solid #3a3a3a}
.tools .grip{margin:4px 0 0 25px}
.toolgrid{display:grid;grid-template-columns:42px 40px;grid-auto-rows:32.4px;margin:12px 0 0 3px}
.t{position:relative;display:flex;align-items:center;justify-content:center;margin:1px}
.t svg{width:22px;height:22px;margin-left:-2px}
.t:nth-child(even) svg{margin-left:0}
.t.on{background:#383838;border-radius:2px}
.t::after{content:"";position:absolute;right:3px;bottom:3px;border-style:solid;border-width:0 0 4px 4px;border-color:transparent transparent #bbb}
.t.nt::after{display:none}
.swatches{margin:4px 0 0 -1px}
.doc{width:1315px;margin-left:2px;display:flex;flex-direction:column}
.tabs{height:37px;display:flex;background:#424242;border-top:1px solid #3a3a3a;border-bottom:2px solid #3c3c3c}
.tab{display:flex;align-items:center;padding:0 13px 0 13px;justify-content:space-between;color:#a2a2a2;border-right:1px solid #3a3a3a;white-space:nowrap;font-size:13.5px}
.tab b{font-weight:600}
.t1{width:498px;padding-left:12px}.t2{width:308px}.t2 b{letter-spacing:.07px}.t3{width:314px;background:#535353;color:#f2f2f2;padding-left:12px}
.view{height:709px;display:flex}
.canvas{position:relative;width:1294px;background:#282828}
.ablabel{position:absolute;left:269px;top:116px;font-weight:700;font-size:13.500px;color:#ccc}
.artboard{position:absolute;left:266px;top:140px;width:762px;height:428px;border:1px solid #807a7a;background:linear-gradient(#dfcfcf,#e3d5d5 22%,#f0e7e7 52%,#fff 88%)}
.navb{position:absolute;width:167px;height:45px;background:#0e0e0e;color:#f4f4f4;font-size:15.500px;line-height:49px;text-align:left;letter-spacing:-.35px}
.n1{left:23px;top:27px;padding-left:55px}.n2{left:215px;top:27px;padding-left:57px;line-height:51px}.n3{left:404px;top:29px;padding-left:51px;background:#6a5858}
.hand{position:absolute;left:90px;top:134px;font-family:"Comic Neue",Lato,cursive;font-style:italic;font-size:19px;fill:#1a1414}
.map{position:absolute;left:77px;top:202px;font-family:Roboto,sans-serif}
.vscroll{position:relative;width:21px;background:#4a4a4a}
.vscroll i{position:absolute;left:2px;top:206px;width:15px;height:90px;background:#6a6a6a;border-radius:2px}
.status{height:21px;display:flex;background:#4a4a4a;border-bottom:1px solid #3a3a3a;line-height:19px}
.pct{width:61px;background:#444;padding-left:8px}
.dims{width:229px;background:#525252;padding-left:36px;display:flex;align-items:center;color:#ccc}
.dims em{font-style:normal;width:181px;letter-spacing:-.25px}
.hscroll{flex:1;display:flex;align-items:center;padding-left:10px;padding-right:30px}
.hscroll i{width:403px;height:15px;background:#6a6a6a;border-radius:2px;margin-left:285px;margin-right:auto}
.dock1{width:48px;margin-left:3px;background:#535353;display:flex;flex-direction:column}
.dock1 .strip{padding-left:31px;border-bottom:1px solid #3a3a3a}
.dock1 .grip{margin:4px 0 0 11px}
.hist{height:43px;padding:8px 0 0 13px;border-bottom:2px solid #3a3a3a}
.dock2{width:139px;margin-left:2px;background:#535353;display:flex;flex-direction:column}
.dock2 .strip{padding-left:122px;border-bottom:1px solid #3a3a3a}
.group{border-bottom:2px solid #3a3a3a;padding-left:2px}
.group .grip{margin:4px 0 0 54px}
.g1{height:156px}.g2{height:121px}.g3{height:121px}
.item{height:35px;display:flex;align-items:center;gap:12px;padding-left:9px;font-weight:700;font-size:12.700px;letter-spacing:-.5px;color:#f3f3f3;white-space:nowrap}
.item svg{width:23px;height:23px;overflow:visible}
.g1 .item:nth-child(2){margin-top:3px}
.g2 .item:nth-child(2){margin-top:3px}
.g3 .item:nth-child(2){margin:5px 6px 3px 3px;height:29px;padding-left:5px;background:#383838;border:1px solid #666;border-radius:3px}
.layers{position:absolute;left:1163px;top:290px;width:297px;height:302px;background:#535353;border:1px solid #3a3a3a;border-top:5px solid #383838;border-right-width:2px;display:flex;flex-direction:column;box-shadow:0 0 2px #2226}
.ltabs{height:35px;flex:none;display:flex;background:#424242;border-bottom:1px solid #3b3b3b}
.ltabs b{font-weight:700;font-size:12.700px;line-height:30px;width:55px;padding-left:12px;letter-spacing:-.55px;color:#9d9d9d;border-right:1px solid #3a3a3a}
.ltabs b:nth-child(2){width:75px}
.ltabs b.on{background:#535353;color:#f3f3f3;height:35px;width:59px;padding-left:11px}
.ltabs svg{margin-left:auto;margin-right:3px}
.frow{height:40px;flex:none;display:flex;align-items:center;border-bottom:1px solid #3f3f3f;padding-left:5px;color:#ddd}
.r1{padding-top:4px}
.box{background:#454545;border:1px solid #5f5f5f;border-radius:3px;display:flex;align-items:center;height:22px;color:#eee}
.kind{width:108px;padding:0 3px 0 10px;gap:4px;margin-right:13px}
.normal{width:161px;padding:0 3px 0 10px;margin-right:8px}
.r2{height:35px}.r3{height:39px;padding-left:8px;border:0;padding-bottom:5px}
.frow label{letter-spacing:-.2px;width:52px;color:#ccc}
.frow .lock{width:40px}
.frow .fill{width:23px;margin-left:29px}
.num{width:63px;height:20px;padding-left:5px;letter-spacing:-.2px}
.num svg{margin-left:auto}
.llist{display:flex;flex:none;height:107px;border-bottom:1px solid #3f3f3f}
.rows{width:275px}
.lrow{height:35px;display:flex;align-items:center;border-bottom:1px solid #444;background:linear-gradient(90deg,#535353 37px,#444 37px 38px,transparent 38px)}
.lrow.sel{background:linear-gradient(90deg,#535353 37px,#444 37px 38px,#6b6b6b 38px)}
.eye{width:38px;padding:2px 0 0 12px}
.thumb{position:relative;width:40px;height:24px;border:1px solid #333;margin-left:25px}
.check{background:repeating-conic-gradient(#ccc 0 25%,#fff 0 50%) 0 0/8px 8px}
.corner{position:absolute;left:-4px;top:-3px}
.mini{position:absolute;left:4px;top:11px;width:23px;height:10px;background:linear-gradient(110deg,#d8ead2,#b9e2ad)}
.pink{background:linear-gradient(#dfcdcf,#fff)}
.nm{margin:-2px 0 0 11px;color:#ddd}
.lscroll{width:20px;background:#4a4a4a}
.lfoot{height:31px;flex:none;padding-left:36px;border-bottom:1px solid #3b3b3b;overflow:hidden}
.lgrip{flex:1;padding:1px 0 0 134px;overflow:hidden}
.taskbar{height:60px;flex:none;display:flex;align-items:flex-start;color:#1c2024;font-size:14.500px;line-height:19.500px;background:linear-gradient(90deg,#deebf7 0,#dfebf8 250px,#cfdff8 370px,#d4daf3 440px,#d6e2f5 540px,#d4dcf2 700px,#d9e3f5 900px,#dadcf0 1080px,#d6e1f5 1200px,#dfebf8 1290px,#e1edf9)}
.weather{display:flex;padding:21px 0 0 27px;gap:9px;width:498px}
.weather>div{margin-top:-9px}
.weather .sub{color:#5c6470}
.apps{display:flex;width:605px}
.apps span{position:relative;width:55px;height:60px;padding:16px 12.500px 0 11.500px}
.apps svg{width:30px;height:30px}
.apps span:nth-child(4) svg{margin-left:-1px}
.apps span:nth-child(10) svg{width:30px;height:28px;margin-top:1px}
.dot{position:absolute;left:24px;top:51px;width:7px;height:4px;border-radius:2px;background:#80858e}
.active::before{content:"";position:absolute;left:5px;top:7px;width:46px;height:47px;border-radius:4px;background:#eef2fb;box-shadow:0 1px 1px #b8c0d0}
.active svg{position:relative;margin-left:1px}
.active .dot{left:18px;width:20px;background:#0f72c8}
.badge{position:absolute;left:29px;top:10px;width:20px;height:20px;border-radius:10px;background:#f31018;color:#fff;text-align:center;font:16.500px/20px "Liberation Sans",sans-serif}
.up{margin:24px 0 0 174px}
.lang{margin:11px 0 0 19px;width:40px;text-align:center;font-size:14.500px;letter-spacing:-.1px}
.sys{margin:19px 0 0 16px}
.clock{margin:10px 0 0 10px;width:85px;text-align:right;letter-spacing:0}
.count{margin:20px 0 0 6px;width:25px;height:20px;border-radius:10px;background:#0a76d0;color:#fff;text-align:center;font-weight:600;font-size:12.500px;line-height:20px}
```
